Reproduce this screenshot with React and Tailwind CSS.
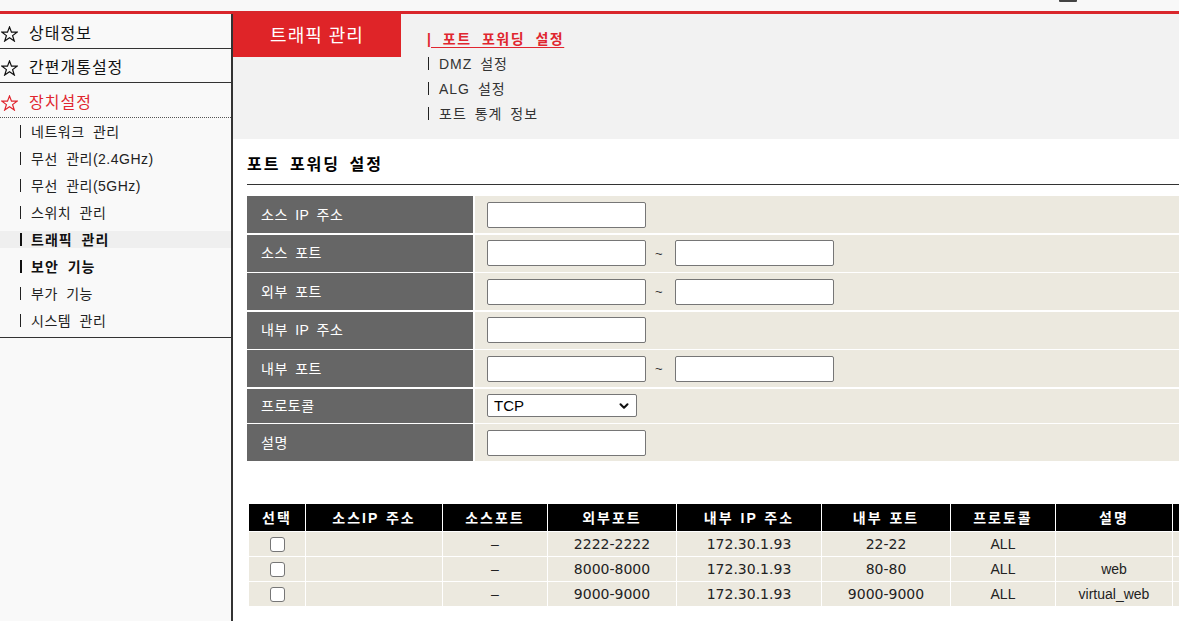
import React from "react";
import { ChevronDown } from "lucide-react";

const subMenu = [
  { t: "네트워크 관리" },
  { t: "무선 관리(2.4GHz)" },
  { t: "무선 관리(5GHz)" },
  { t: "스위치 관리" },
  { t: "트래픽 관리", active: true },
  { t: "보안 기능", bold: true },
  { t: "부가 기능" },
  { t: "시스템 관리" },
];

const rows = [
  ["2222-2222", "172.30.1.93", "22-22", "ALL", ""],
  ["8000-8000", "172.30.1.93", "80-80", "ALL", "web"],
  ["9000-9000", "172.30.1.93", "9000-9000", "ALL", "virtual_web"],
];

function Star({ color }) {
  return (
    <svg width="17" height="16" viewBox="0 0 17 16" className="ml-[1px] mr-[11px]">
      <polygon
        points="8.5,1 10.5,6.2 16,6.2 11.6,9.6 13.3,15 8.5,11.7 3.7,15 5.4,9.6 1,6.2 6.5,6.2"
        fill="none"
        stroke={color}
        strokeWidth="1.2"
        strokeLinejoin="miter"
      />
    </svg>
  );
}

function Input() {
  return (
    <input
      type="text"
      className="w-[159px] h-[26px] border border-[#767676] rounded-[2px] bg-white px-1 text-[14px] outline-none"
    />
  );
}

function Range() {
  return (
    <div className="flex items-center">
      <Input />
      <span className="ml-[9px] mr-[12px] w-[8px] text-[13px] text-[#333] leading-none">~</span>
      <Input />
    </div>
  );
}

function FormRow({ label, children, tall = true }) {
  return (
    <div className={tall ? "flex gap-[2px] h-[37px]" : "flex gap-[2px] h-[34px]"}>
      <div className="w-[226px] shrink-0 bg-[#666666] text-white text-[14px] pl-[14px] flex items-center leading-[16px] tracking-[0.5px] [word-spacing:3px]">
        {label}
      </div>
      <div className="flex-1 bg-[#ece9df] pl-[12px] flex items-center">{children}</div>
    </div>
  );
}

function Check() {
  return <div className="w-[15px] h-[15px] border border-[#767676] rounded-[3px] bg-white" />;
}

function LinkRow({ children }) {
  return (
    <div className="h-[25px] flex items-center text-[#333] tracking-[1px] [word-spacing:3px]">
      <span className="w-[1px] h-[13px] bg-[#222] ml-[1px] mr-[10px]" />
      {children}
    </div>
  );
}

export default function App() {
  return (
    <div className="w-[1179px] h-[621px] overflow-hidden bg-white text-[#222] font-['Liberation_Sans','Noto_Sans_CJK_KR',sans-serif]">
      {/* top strip */}
      <div className="h-[11px] bg-[#f8f8f8] flex">
        <div className="ml-[1059px] w-[18px] h-[2px] bg-[#444] rounded-b-[1px]" />
      </div>
      <div className="h-[3px] bg-[#d9262b]" />

      <div className="flex h-[607px]">
        {/* sidebar */}
        <aside className="w-[233px] shrink-0 border-r-2 border-[#333] bg-[#f9f9f9]">
          <div className="h-[35px] pt-[5px] flex items-center border-b border-[#333] text-[16px] text-[#111] leading-[18px] tracking-[1px]">
            <Star color="#111" />
            상태정보
          </div>
          <div className="h-[34px] pt-[5px] flex items-center border-b border-[#333] text-[16px] text-[#111] leading-[18px] tracking-[1px]">
            <Star color="#111" />
            간편개통설정
          </div>
          <div className="h-[35px] pt-[5px] flex items-center border-b border-dotted border-[#555] text-[16px] text-[#e0262f] leading-[18px] tracking-[1px]">
            <Star color="#e0262f" />
            장치설정
          </div>
          <div className="pb-[3px] border-b border-[#333]">
            {subMenu.map((m) => (
              <div key={m.t} className="h-[27px] flex items-center">
                <div
                  className={
                    m.active
                      ? "w-full h-[17px] flex items-center pl-[20px] text-[14px] leading-[16px] bg-[#efefef] font-bold text-[#111] tracking-[1px] [word-spacing:4px]"
                      : m.bold
                      ? "w-full h-[17px] flex items-center pl-[20px] text-[14px] leading-[16px] font-bold text-[#111] tracking-[1px] [word-spacing:4px]"
                      : "w-full h-[17px] flex items-center pl-[20px] text-[14px] leading-[16px] text-[#222] tracking-[0.5px] [word-spacing:4px]"
                  }
                >
                  <span
                    className={
                      m.active || m.bold
                        ? "w-[2px] h-[13px] bg-[#111] mr-[9px]"
                        : "w-[1px] h-[13px] bg-[#222] mr-[10px]"
                    }
                  />
                  {m.t}
                </div>
              </div>
            ))}
          </div>
        </aside>

        {/* main */}
        <main className="flex-1 min-w-0">
          <div className="h-[125px] bg-[#f2f2f2] flex">
            <div className="w-[168px] h-[43px] bg-[#df2428] text-white text-[18px] flex items-center justify-center leading-[20px] tracking-[1px]">
              트래픽 관리
            </div>
            <div className="ml-[26px] pt-[12px] flex flex-col text-[14px] leading-[16px]">
              <div className="h-[25px] flex items-center">
                <a className="text-[#e0262f] underline underline-offset-[3px] font-bold tracking-[1.5px] [word-spacing:5px]">
                  | 포트 포워딩 설정
                </a>
              </div>
              <LinkRow>DMZ 설정</LinkRow>
              <LinkRow>ALG 설정</LinkRow>
              <LinkRow>포트 통계 정보</LinkRow>
            </div>
          </div>

          <div className="pl-[14px]">
            <div className="h-[46px] pt-[7px] flex items-center border-b border-[#333] text-[16px] font-bold text-black leading-[20px] tracking-[2px] [word-spacing:3px]">
              포트 포워딩 설정
            </div>

            <div className="mt-[11px] flex flex-col gap-[1.5px]">
              <FormRow label="소스 IP 주소">
                <Input />
              </FormRow>
              <FormRow label="소스 포트">
                <Range />
              </FormRow>
              <FormRow label="외부 포트">
                <Range />
              </FormRow>
              <FormRow label="내부 IP 주소">
                <Input />
              </FormRow>
              <FormRow label="내부 포트">
                <Range />
              </FormRow>
              <FormRow label="프로토콜" tall={false}>
                <div className="w-[150px] h-[23px] border border-[#767676] rounded-[2px] bg-white flex items-center justify-between pl-[6px] pr-[5px] text-[15px] text-black leading-none">
                  <span>TCP</span>
                  <ChevronDown size={14} strokeWidth={3.5} color="#111" />
                </div>
              </FormRow>
              <FormRow label="설명">
                <Input />
              </FormRow>
            </div>

            <div className="mt-[43px] ml-[2px] grid grid-cols-[56px_136px_104px_128px_144px_128px_104px_116px_1fr] gap-px bg-white text-[14px]">
              {["선택", "소스IP 주소", "소스포트", "외부포트", "내부 IP 주소", "내부 포트", "프로토콜", "설명", ""].map(
                (h, i) => (
                  <div
                    key={i}
                    className="h-[27px] bg-black text-white font-bold flex items-center justify-center leading-[16px] tracking-[2px] [word-spacing:1px]"
                  >
                    {h}
                  </div>
                )
              )}
              {rows.map((r, ri) => (
                <React.Fragment key={ri}>
                  <div className="h-[24px] bg-[#ece9df] flex items-center justify-center">
                    <Check />
                  </div>
                  <div className="h-[24px] bg-[#ece9df]" />
                  <div className="h-[24px] bg-[#ece9df] flex items-center justify-center">–</div>
                  <div className="h-[24px] bg-[#ece9df] flex items-center justify-center font-['DejaVu_Sans',sans-serif] text-[14px]">
                    {r[0]}
                  </div>
                  <div className="h-[24px] bg-[#ece9df] flex items-center justify-center font-['DejaVu_Sans',sans-serif] text-[14px]">
                    {r[1]}
                  </div>
                  <div className="h-[24px] bg-[#ece9df] flex items-center justify-center font-['DejaVu_Sans',sans-serif] text-[14px]">
                    {r[2]}
                  </div>
                  <div className="h-[24px] bg-[#ece9df] flex items-center justify-center">{r[3]}</div>
                  <div className="h-[24px] bg-[#ece9df] flex items-center justify-center">{r[4]}</div>
                  <div className="h-[24px] bg-[#ece9df]" />
                </React.Fragment>
              ))}
            </div>
          </div>
        </main>
      </div>
    </div>
  );
}
